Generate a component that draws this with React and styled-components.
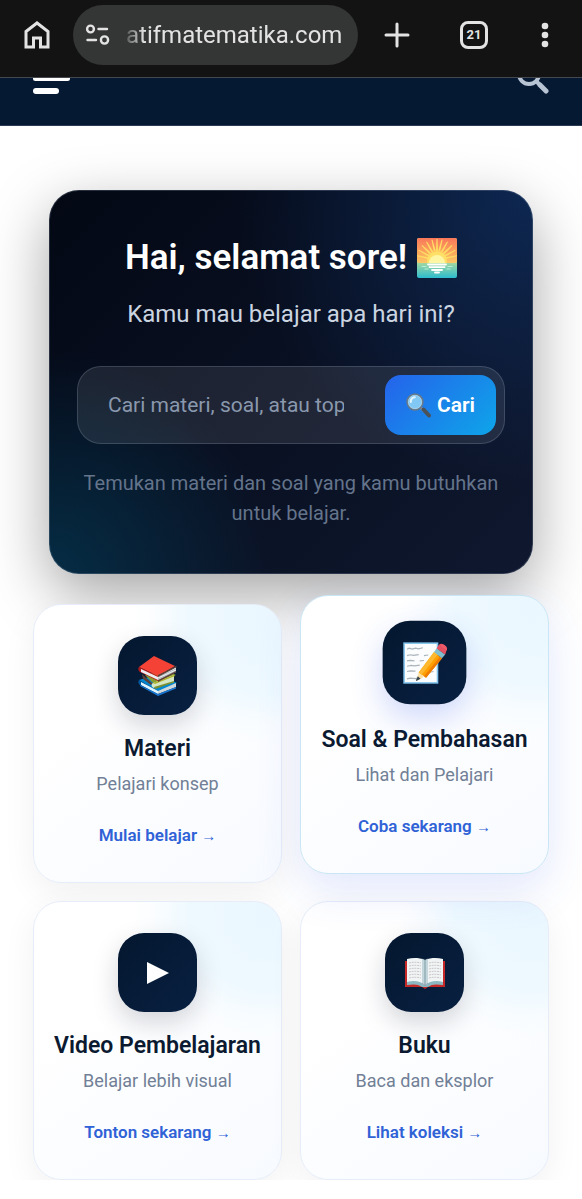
import React from "react";
import styled, { createGlobalStyle } from "styled-components";

const GlobalStyle = createGlobalStyle`
  * {
    box-sizing: border-box;
  }
  body {
    margin: 0;
    background: #ffffff;
    font-family: Roboto, "DejaVu Sans", sans-serif;
  }
  h1, h2, p {
    margin: 0;
  }
  button, input {
    font-family: inherit;
    border: none;
  }
`;

const BrowserBar = styled.div`
  display: flex;
  align-items: center;
  height: 78px;
  padding: 0 30px 8px 23px;
  background: #131313;
  border-bottom: 1px solid #45494f;
  color: #e3e3e3;
`;
const BarButton = styled.button`
  display: flex;
  padding: 0;
  background: none;
  color: inherit;
  cursor: pointer;
`;
const BarActions = styled.div`
  display: flex;
  align-items: center;
  gap: 50px;
  margin-left: 26px;
`;
const AddressBar = styled.label`
  display: flex;
  flex: 1;
  align-items: center;
  gap: 16px;
  height: 60px;
  min-width: 0;
  margin-left: 22px;
  padding: 0 10px 0 12px;
  border-radius: 30px;
  background: #343635;
`;
const Address = styled.input`
  flex: 1;
  min-width: 0;
  padding: 0;
  background: none;
  color: #e3e3e3;
  font-size: 24px;
  line-height: 32px;
  outline: none;
  -webkit-mask-image: linear-gradient(90deg, rgba(0, 0, 0, 0.2), #000 18px);
  mask-image: linear-gradient(90deg, rgba(0, 0, 0, 0.2), #000 18px);
`;

const SiteHeader = styled.header`
  display: flex;
  justify-content: space-between;
  align-items: flex-end;
  height: 48px;
  padding: 0 33px 31px;
  overflow: hidden;
  background: #051932;
  border-bottom: 1px solid #2b3b52;
`;

const Main = styled.main`
  padding: 64px 33px 0;
  overflow: hidden;
`;
const Hero = styled.section`
  margin: 0 16px;
  padding: 44px 27px 45px;
  border: 1px solid rgba(148, 163, 184, 0.25);
  border-radius: 30px;
  background: radial-gradient(
      circle at 100% 0%,
      rgba(20, 80, 165, 0.36),
      transparent 48%
    ),
    radial-gradient(
      circle at 0% 100%,
      rgba(0, 90, 125, 0.4),
      transparent 36%
    ),
    linear-gradient(135deg, #030814, #0f182f);
  background-origin: border-box;
  box-shadow: 0 20px 60px rgba(0, 0, 0, 0.36);
  text-align: center;
`;
const Greeting = styled.h1`
  display: flex;
  justify-content: center;
  align-items: center;
  gap: 10px;
  color: #ffffff;
  font-size: 35px;
  font-weight: 600;
  line-height: 46px;
`;
const Question = styled.p`
  margin-top: 15px;
  color: #cbd5e1;
  font-size: 24px;
  line-height: 36px;
`;
const SearchForm = styled.form`
  display: flex;
  margin-top: 34px;
  padding: 8px;
  border: 1px solid rgba(148, 163, 184, 0.26);
  border-radius: 24px;
  background: rgba(255, 255, 255, 0.09);
`;
const SearchInput = styled.input`
  flex: 1;
  min-width: 0;
  height: 60px;
  padding: 0 41px 0 22px;
  background: none;
  color: #ffffff;
  font-size: 21px;
  outline: none;
  &::placeholder {
    color: #8a98ae;
    opacity: 1;
  }
`;
const SearchButton = styled.button`
  display: flex;
  justify-content: center;
  align-items: center;
  gap: 6px;
  width: 111px;
  height: 60px;
  border-radius: 16px;
  background: linear-gradient(135deg, #2563eb, #0ea5e9);
  color: #ffffff;
  font-size: 21px;
  font-weight: 600;
  cursor: pointer;
`;
const Hint = styled.p`
  margin-top: 24px;
  color: #64748b;
  font-size: 20px;
  line-height: 30px;
`;

const CardGrid = styled.div`
  display: grid;
  grid-template-columns: 1fr 1fr;
  gap: 18px;
  margin-top: 30px;
`;
const CardBox = styled.article`
  display: flex;
  flex-direction: column;
  align-items: center;
  padding: 31px 8px 35px;
  border: 1px solid ${(props) => (props.$active ? "#c9e6f5" : "#e6edf9")};
  border-radius: 28px;
  background: radial-gradient(
      circle at 94% 4%,
      #eaf7ff 0,
      #eef9ff 22%,
      rgba(248, 252, 255, 0.7) 31%,
      rgba(252, 254, 255, 0) 38%
    ),
    linear-gradient(145deg, #ffffff 30%, #f7faff);
  box-shadow: ${(props) =>
    props.$active
      ? "0 16px 44px rgba(59, 91, 235, 0.15)"
      : "0 10px 34px rgba(15, 23, 42, 0.06)"};
  transform: ${(props) => (props.$active ? "translateY(-9px)" : "none")};
`;
const IconTile = styled.div`
  display: flex;
  justify-content: center;
  align-items: center;
  width: 79px;
  height: 79px;
  border-radius: 26px;
  background: linear-gradient(135deg, #04172f, #082041);
  box-shadow: ${(props) =>
    props.$active
      ? "0 12px 30px rgba(59, 91, 235, 0.24)"
      : "0 10px 26px rgba(15, 23, 42, 0.18)"};
  transform: ${(props) =>
    props.$active ? "translateY(-4px) scale(1.06)" : "none"};
`;
const CardTitle = styled.h2`
  margin-top: 20px;
  color: #0b1a30;
  font-size: 23px;
  font-weight: 600;
  line-height: 28px;
  white-space: nowrap;
`;
const CardText = styled.p`
  margin-top: 8px;
  color: #718096;
  font-size: 18px;
  line-height: 26px;
`;
const CardLink = styled.a`
  margin-top: 26px;
  color: #2f62d6;
  font-size: 17px;
  font-weight: 600;
  line-height: 24px;
  text-decoration: none;
`;
const Arrow = styled.span`
  font-family: "Liberation Sans", sans-serif;
  font-size: 15px;
  line-height: 1;
`;

const HomeIcon = () => (
  <svg width="28" height="30" viewBox="0 0 28 30" fill="none">
    <path
      d="M3 11.500 14 3l11 8.500V27h-7.500v-9h-7v9H3z"
      stroke="currentColor"
      strokeWidth="3"
    />
  </svg>
);

const TuneIcon = () => (
  <svg
    width="25"
    height="22"
    viewBox="0 0 25 22"
    fill="none"
    stroke="#e3e3e3"
    strokeWidth="2.4"
    strokeLinecap="round"
  >
    <circle cx="5.500" cy="5" r="3.400" />
    <path d="M13.500 5H22M2.500 16H11" />
    <circle cx="19.500" cy="16" r="3.600" />
  </svg>
);

const PlusIcon = () => (
  <svg width="26" height="26" viewBox="0 0 26 26" fill="none">
    <path
      d="M13 2v22M2 13h22"
      stroke="currentColor"
      strokeWidth="3"
      strokeLinecap="round"
    />
  </svg>
);

const TabCount = styled.span`
  display: flex;
  justify-content: center;
  align-items: center;
  width: 28px;
  height: 28px;
  border: 3px solid currentColor;
  border-radius: 8px;
  font-size: 13px;
  font-weight: 700;
`;

const MoreIcon = () => (
  <svg width="14" height="26" viewBox="0 0 14 26" fill="currentColor">
    <circle cx="7" cy="4" r="3.300" />
    <circle cx="7" cy="13" r="3.300" />
    <circle cx="7" cy="22" r="3.300" />
  </svg>
);

const MenuIcon = () => (
  <svg width="37" height="26" viewBox="0 0 37 26" fill="#ffffff">
    <rect width="37" height="5" rx="2.500" />
    <rect y="8" width="37" height="5" rx="2.500" />
    <rect y="20" width="26" height="6" rx="3" />
  </svg>
);

const HeaderSearchIcon = () => (
  <svg width="32" height="32" viewBox="0 0 32 32" fill="none">
    <circle cx="12" cy="12" r="10" stroke="#b8c4d4" strokeWidth="4" />
    <path d="m19 19 3 3" stroke="#b8c4d4" strokeWidth="4" />
    <path
      d="m23 23 6 6"
      stroke="#b8c4d4"
      strokeWidth="5"
      strokeLinecap="round"
    />
  </svg>
);

const RAYS = [-168, -152, -136, -120, -104, -90, -76, -60, -44, -28, -12];

const SunriseIcon = () => (
  <svg width="40" height="40" viewBox="0 0 40 40">
    <defs>
      <linearGradient id="sky" x1="0" y1="0" x2="0" y2="1">
        <stop offset="0" stopColor="#f9775a" />
        <stop offset="0.6" stopColor="#fba85c" />
        <stop offset="1" stopColor="#fcc868" />
      </linearGradient>
      <linearGradient id="sea" x1="0" y1="0.600" x2="0" y2="1">
        <stop offset="0" stopColor="#a9d99c" />
        <stop offset="1" stopColor="#2cbccf" />
      </linearGradient>
      <clipPath id="frame">
        <rect width="40" height="25" rx="2" />
      </clipPath>
    </defs>
    <rect width="40" height="40" rx="2" fill="url(#sea)" />
    <g clipPath="url(#frame)">
      <rect width="40" height="25" fill="url(#sky)" />
      {RAYS.map((a) => (
        <path
          key={a}
          d="M29 21 41 21.500v1L29 23z"
          fill="#ffdc63"
          transform={`rotate(${a} 20 22)`}
        />
      ))}
      <circle cx="20" cy="23" r="10" fill="#ffdf66" />
    </g>
    <path d="M12 25a8 8 0 1 1 16 0z" fill="#fff6a3" />
    <path
      d="M11 26.500h18M12.500 29.200h15M15 32h10M18 34.500h4"
      stroke="#ffffff"
      strokeWidth="1.800"
      strokeLinecap="round"
    />
    <path
      d="M5 28.500h4M31 28.500h4M8 31h3M30 31h3"
      stroke="#b8edd8"
      strokeWidth="1.200"
      strokeLinecap="round"
    />
  </svg>
);

const MagnifierIcon = () => (
  <svg width="25" height="25" viewBox="0 0 25 25" fill="none">
    <path d="m14 14 4 4" stroke="#8a9299" strokeWidth="2.600" />
    <path
      d="m17.500 16.500 5.500 6"
      stroke="#4b5258"
      strokeWidth="4"
      strokeLinecap="round"
    />
    <circle cx="9" cy="9" r="7.800" fill="#82c8f5" stroke="#65798a" strokeWidth="1.800" />
    <circle cx="9" cy="9" r="6.700" stroke="#b4d9ed" strokeWidth="0.700" />
    <path
      d="M4.800 9c-.3-2.500 1.400-4.600 4-4.700"
      stroke="#e1f5fe"
      strokeWidth="2"
      strokeLinecap="round"
    />
  </svg>
);

const BooksIcon = () => (
  <svg width="42" height="42" viewBox="0 0 42 42">
    <path d="m2 25 20-6 18 9-19 9z" fill="#0288d1" />
    <path d="m2 25 19 11v4L3 30c-2-1-2-4-1-5z" fill="#01579b" />
    <path d="m4 27 17 9v3L4 30z" fill="#e1f5fe" />
    <path d="m21 36 18-8v4l-18 7z" fill="#cfd8dc" />
    <path d="m21 39 18-7v1.500L21 41 3 31v-1z" fill="#1976d2" />
    <path d="m8 20 20-5 11 5-22 9z" fill="#8a9a32" />
    <path d="m5 19 11 10-2 1-8-6z" fill="#5d4037" />
    <path d="m16 28 21-8v7l-20 6c-3-1-3-4-1-5z" fill="#d6e6c5" />
    <path d="m16 28 21-8 1 1-20 8z" fill="#afb42b" />
    <path d="m17 32 20-6v1.500L18 34z" fill="#7c8f31" />
    <path d="M2 12 17 1l21 10-17 10z" fill="#f44336" />
    <path d="M17 1 38 11l2 1L19 2z" fill="#5d4037" />
    <path d="m2 12 19 9v5L3 17c-2-1-2-4-1-5z" fill="#b71c1c" />
    <path d="m4 14 17 8v3L4 17z" fill="#eceff1" />
    <path d="m21 21 18-9v5l-18 9z" fill="#eceff1" />
    <path d="m21 22 18-8M21 24l18-8" stroke="#9aa3a8" strokeWidth="0.700" />
    <path d="m21 20 18-9 1 1-19 10zM21 25l18-9v1.500L21 27z" fill="#5d4037" />
  </svg>
);

const MemoIcon = () => (
  <svg width="42" height="42" viewBox="0 0 42 42">
    <rect x="0.500" y="1.500" width="33" height="39" fill="#82c4ec" />
    <rect x="2" y="3" width="30" height="36" fill="#fafcfd" />
    <g stroke="#aab4bb" strokeWidth="1.100" fill="none">
      <path d="m4 8 2-1 3 .8L12 7l3 .6 4-1" />
      <path d="m4 14 3-.8 3 .6 5-.7M20 14l4-.6" />
      <path d="m4 19 3-.5 4 .4M16 19l4-.4" />
      <path d="m4 24 4-.8 3 .5 5-.7" />
      <path d="m4 29 3-.6 5 .3M23 30l6-1" />
      <path d="m4 36 3-.7 5 .4 2-.6" />
    </g>
    <path d="m15 30 5 4-6 3.500c-1 .2-1-.5-.8-1z" fill="#ffe0a3" />
    <path d="m14.200 33.500 2.600 2.300-3.500 2c-.8.2-1-.4-.7-1z" fill="#37474f" />
    <path d="M15 30 29.500 10.500l7.500 6L22 35z" fill="#ffa000" />
    <path d="M15 30 29.500 10.500 33 13 18 32z" fill="#ffb931" />
    <path d="m20 33.500 15-18.500 2 1.500L22 35z" fill="#ef7c00" />
    <path d="m29.500 10.500 2.500-3.500 8 6-3 3.500z" fill="#81bfce" />
    <path d="m32 7 2-3c2-2 4-1 6 .5s2.500 3.500 1 5.500L40 13z" fill="#ef5a68" />
    <path d="m32 7 2-3 2-1c-1 2 3 5 5 5l-1 5z" fill="#d9485a" opacity="0.45" />
  </svg>
);

const PlayIcon = () => (
  <svg width="22" height="22" viewBox="0 0 22 22">
    <path d="M0 0 22 11 0 22z" fill="#ffffff" />
  </svg>
);

const OpenBookIcon = () => (
  <svg width="42" height="32" viewBox="0 0 42 32">
    <path d="M1 4h40v26H24l-3 2-3-2H1z" fill="#c62828" />
    <path d="M3 2v24h15l3 2V3C15 .5 9 .5 3 2z" fill="#f1f4f5" />
    <path d="M39 2v24H24l-3 2V3c6-2.500 12-2.500 18-1z" fill="#f1f4f5" />
    <path d="M3 25c7-2 13-1 18 3 5-4 11-5 18-3v3c-7-1-11-1-15 2h-6c-4-3-8-3-15-2z" fill="#8db7c0" />
    <path d="M18 1.500 21 3l3-1.500V26l-3 3-3-3z" fill="#a9c6cd" opacity="0.650" />
    <path d="M21 3v26" stroke="#7f9ba5" strokeWidth="1" />
    <g stroke="#c3bdbd" strokeWidth="0.800" fill="none" strokeDasharray="2 0.700">
      <path d="M5 6c4-1 8-1 12 0M5 9c4-1 8-1 12 0M5 12c4-1 8-1 12 0M5 15c4-1 8-1 12 0M5 18c4-1 8-1 12 0M5 21c4-1 8-1 12 0" />
      <path d="M25 6c4-1 8-1 12 0M25 9c4-1 8-1 12 0M25 12c4-1 8-1 12 0M25 15c4-1 8-1 12 0M25 18c4-1 8-1 12 0M25 21c4-1 8-1 12 0" />
    </g>
  </svg>
);

const cards = [
  {
    title: "Materi",
    text: "Pelajari konsep",
    link: "Mulai belajar",
    icon: <BooksIcon />,
  },
  {
    title: "Soal & Pembahasan",
    text: "Lihat dan Pelajari",
    link: "Coba sekarang",
    icon: <MemoIcon />,
    active: true,
  },
  {
    title: "Video Pembelajaran",
    text: "Belajar lebih visual",
    link: "Tonton sekarang",
    icon: <PlayIcon />,
  },
  {
    title: "Buku",
    text: "Baca dan eksplor",
    link: "Lihat koleksi",
    icon: <OpenBookIcon />,
  },
];

const Card = ({ title, text, link, icon, active }) => (
  <CardBox $active={active}>
    <IconTile $active={active}>{icon}</IconTile>
    <CardTitle>{title}</CardTitle>
    <CardText>{text}</CardText>
    <CardLink href="#">
      {link} <Arrow>→</Arrow>
    </CardLink>
  </CardBox>
);

const App = () => {
  return (
    <>
      <GlobalStyle />
      <BrowserBar>
        <BarButton aria-label="Home">
          <HomeIcon />
        </BarButton>
        <AddressBar>
          <TuneIcon />
          <Address aria-label="Address" defaultValue="atifmatematika.com" />
        </AddressBar>
        <BarActions>
          <BarButton aria-label="New tab">
            <PlusIcon />
          </BarButton>
          <BarButton aria-label="Tabs">
            <TabCount>21</TabCount>
          </BarButton>
          <BarButton aria-label="More">
            <MoreIcon />
          </BarButton>
        </BarActions>
      </BrowserBar>
      <SiteHeader>
        <BarButton aria-label="Menu">
          <MenuIcon />
        </BarButton>
        <BarButton aria-label="Search">
          <HeaderSearchIcon />
        </BarButton>
      </SiteHeader>
      <Main>
        <Hero>
          <Greeting>
            Hai, selamat sore! <SunriseIcon />
          </Greeting>
          <Question>Kamu mau belajar apa hari ini?</Question>
          <SearchForm onSubmit={(e) => e.preventDefault()}>
            <SearchInput
              aria-label="Cari materi"
              placeholder="Cari materi, soal, atau topik"
            />
            <SearchButton type="submit">
              <MagnifierIcon />
              Cari
            </SearchButton>
          </SearchForm>
          <Hint>Temukan materi dan soal yang kamu butuhkan untuk belajar.</Hint>
        </Hero>
        <CardGrid>
          {cards.map((card) => (
            <Card key={card.title} {...card} />
          ))}
        </CardGrid>
      </Main>
    </>
  );
};

export default App;
